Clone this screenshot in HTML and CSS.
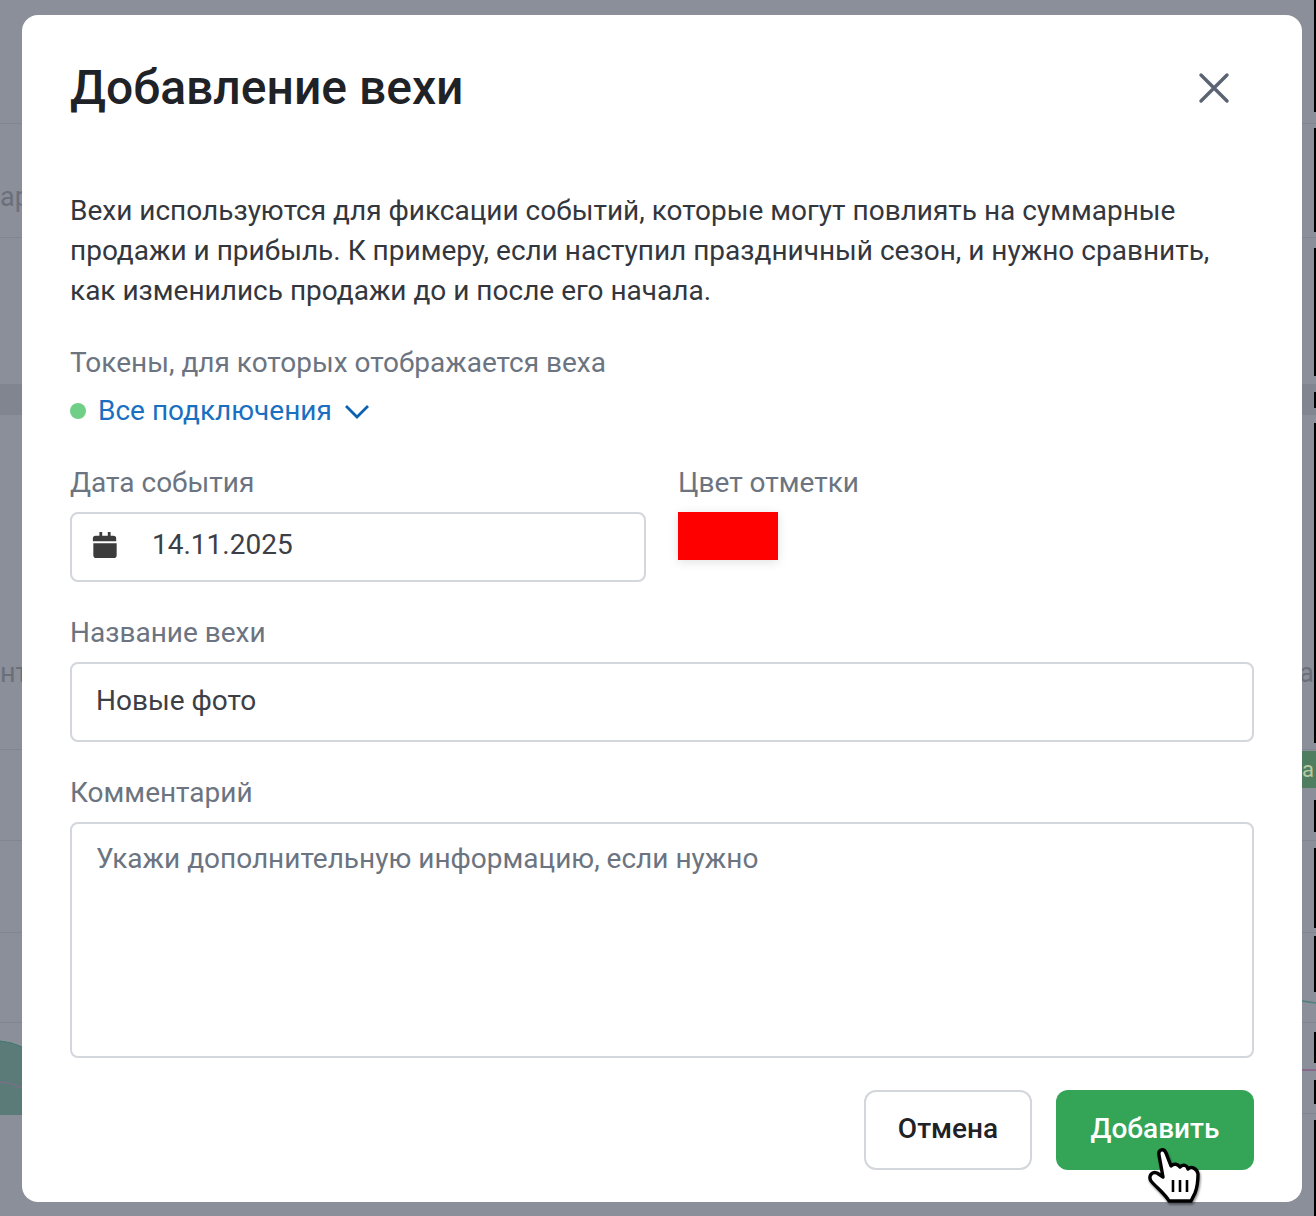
FILE: index.html
```html
<!DOCTYPE html>
<html lang="ru">

<head>
    <meta charset="UTF-8">
    <title>Добавление вехи</title>
    <link rel="stylesheet" href="styles.css">
</head>

<body>
    <div class="backdrop">
        <div class="bg-line" style="top: 123px"></div>
        <div class="bg-line" style="top: 237px"></div>
        <div class="bg-band" style="top: 384px; height: 31px"></div>
        <div class="bg-line" style="top: 749px"></div>
        <div class="bg-line" style="top: 840px"></div>
        <div class="bg-line" style="top: 932px"></div>
        <div class="bg-line" style="top: 1022px"></div>
        <div class="bg-line" style="top: 1113px"></div>
        <span class="bg-text" style="top: 182px; left: 0">ар</span>
        <span class="bg-text" style="top: 658px; left: 0">нт</span>
        <span class="bg-text" style="top: 658px; right: 2px">а</span>
        <span class="bg-tag">а</span>
        <svg class="bg-chart-left" width="22" height="76" viewBox="0 0 22 76">
            <path d="M0 2 Q12 3 22 8 V76 H0 Z" fill="#5b7b78" />
            <path d="M0 2 Q12 3 22 8" fill="none" stroke="#3f7a70" />
            <path d="M0 43 Q10 43 22 49" fill="none" stroke="#8a6a8c" />
        </svg>
        <svg class="bg-chart-right" width="14" height="80" viewBox="0 0 14 80">
            <path d="M0 1 Q7 2 14 3" fill="none" stroke="#4f7f78" stroke-width="1.5" />
            <path d="M0 70 H14" fill="none" stroke="#8a6a8c" stroke-width="2" />
        </svg>
        <svg class="edge-strip" width="2" height="1216" viewBox="0 0 2 1216">
            <path d="M0 0 H2 V112 H0 Z M0 128 H2 V232 H0 Z M0 248 H2 V376 H0 Z M0 392 H2 V408 H0 Z M0 423 H2 V743 H0 Z M0 800 H2 V832 H0 Z M0 848 H2 V928 H0 Z M0 936 H2 V992 H0 Z M0 1032 H2 V1063 H0 Z M0 1080 H2 V1104 H0 Z M0 1120 H2 V1216 H0 Z" fill="#000" />
        </svg>
    </div>

    <div class="modal">
        <header class="modal-head">
            <h1 class="modal-title">Добавление вехи</h1>
            <button class="modal-close" aria-label="Закрыть">
                <svg width="32" height="32" viewBox="0 0 32 32">
                    <path d="M3 3 L29 29 M29 3 L3 29" fill="none" stroke="#5a6472" stroke-width="3.4" stroke-linecap="round" />
                </svg>
            </button>
        </header>

        <p class="modal-text">Вехи используются для фиксации событий, которые могут повлиять на суммарные продажи и прибыль. К примеру, если наступил праздничный сезон, и нужно сравнить, как изменились продажи до и после его начала.</p>

        <div class="field-label">Токены, для которых отображается веха</div>
        <div class="tokens">
            <span class="dot"></span>
            <span class="tokens-name">Все подключения</span>
            <svg width="26" height="16" viewBox="0 0 26 16">
                <path d="M2 3 L13 14 L24 3" fill="none" stroke="#0b62b0" stroke-width="2.8" />
            </svg>
        </div>

        <div class="date-row">
            <div class="date-col">
                <div class="field-label">Дата события</div>
                <div class="input date-input">
                    <svg width="26" height="28" viewBox="0 0 26 30">
                        <path d="M7 1 h3 v4 h6 v-4 h3 v4 h3 a3 3 0 0 1 3 3 v3 h-25 v-3 a3 3 0 0 1 3 -3 h4 Z" fill="#3c3c3c" />
                        <path d="M0.5 13 h25 v13 a3 3 0 0 1 -3 3 h-19 a3 3 0 0 1 -3 -3 Z" fill="#3c3c3c" />
                    </svg>
                    <span>14.11.2025</span>
                </div>
            </div>
            <div class="color-col">
                <div class="field-label">Цвет отметки</div>
                <div class="color-swatch"></div>
            </div>
        </div>

        <div class="field-label name-label">Название вехи</div>
        <div class="input name-input">Новые фото</div>

        <div class="field-label comment-label">Комментарий</div>
        <div class="input comment-input">Укажи дополнительную информацию, если нужно</div>

        <footer class="modal-foot">
            <button class="btn btn-cancel">Отмена</button>
            <button class="btn btn-add">Добавить</button>
        </footer>
    </div>

    <svg class="cursor" width="52" height="60" viewBox="0 0 52 60">
        <path d="M11 9 C10 3 16 2 18 7 L23 20 C26 17 30 18 32 21 C35 18 39 19 40 23 C43 20 49 22 50 28 C50 36 49 42 47 47 L43 55 L21 55 C17 48 9 42 3 35 C0 30 4 25 9 27 L15 31 Z" fill="#fff" stroke="#000" stroke-width="3.4" stroke-linejoin="round" />
        <path d="M25 34 V46 M32 34 V46 M39 34 V46" stroke="#000" stroke-width="2.6" fill="none" />
    </svg>
</body>

</html>
```

FILE: styles.css
```css
html,
body {
    margin: 0;
    height: 100%;
}

body {
    position: relative;
    width: 1316px;
    height: 1216px;
    overflow: hidden;
    background-color: #8a8f99;
    font-family: Roboto, "Liberation Sans", sans-serif;
    box-sizing: border-box;
    padding: 15px 14px 14px 22px;
}

/* page behind the dialog */
.backdrop {
    position: absolute;
    inset: 0;
}

.bg-line {
    position: absolute;
    left: 0;
    right: 0;
    height: 1px;
    background-color: #80858f;
}

.bg-band {
    position: absolute;
    left: 0;
    right: 0;
    background-color: #80858f;
}

.bg-text {
    position: absolute;
    font-size: 27px;
    line-height: 30px;
    color: #6a6f79;
}

.bg-tag {
    position: absolute;
    top: 751px;
    right: 0;
    width: 14px;
    height: 37px;
    background-color: #4f7d60;
    color: #b8c9a0;
    font-size: 22px;
    line-height: 37px;
}

.bg-chart-left {
    position: absolute;
    left: 0;
    top: 1039px;
}

.bg-chart-right {
    position: absolute;
    right: 0;
    top: 1000px;
}

.edge-strip {
    position: absolute;
    top: 0;
    right: 0;
}

/* dialog */
.modal {
    position: relative;
    box-sizing: border-box;
    height: 1187px;
    padding: 48px 48px 32px;
    background-color: #fff;
    border-radius: 16px;
}

.modal-head {
    display: flex;
    justify-content: space-between;
    align-items: center;
    height: 48px;
    margin-bottom: 80px;
}

.modal-title {
    margin: 0;
    padding-top: 2px;
    font-size: 48px;
    font-weight: 500;
    line-height: 48px;
    color: #1f2226;
}

.modal-close {
    display: flex;
    margin-top: 2px;
    margin-right: 24px;
    padding: 0;
    border: none;
    background: none;
}

.modal-text {
    margin: 0 0 32px;
    font-size: 28px;
    line-height: 40px;
    color: #33373d;
}

.field-label {
    font-size: 28px;
    line-height: 40px;
    color: #6b7480;
}

.tokens {
    display: flex;
    align-items: center;
    height: 40px;
    margin: 8px 0 31px;
}

.dot {
    width: 16px;
    height: 16px;
    margin-right: 12px;
    border-radius: 50%;
    background-color: #6fcf86;
}

.tokens-name {
    margin-right: 12px;
    font-size: 28px;
    line-height: 40px;
    color: #1a6fc0;
}

.date-row {
    display: flex;
    gap: 32px;
}

.date-row .field-label,
.name-label,
.comment-label {
    line-height: 42px;
}

.date-col {
    width: 576px;
}

.input {
    box-sizing: border-box;
    border: 2px solid #d3d6da;
    border-radius: 8px;
    font-size: 28px;
    color: #3c4046;
}

.date-input {
    display: flex;
    align-items: center;
    gap: 34px;
    height: 70px;
    margin-top: 8px;
    padding: 0 0 5px 20px;
}

.color-swatch {
    width: 100px;
    height: 48px;
    margin-top: 8px;
    background-color: #ff0000;
    box-shadow: 0 2px 10px rgba(0, 0, 0, 0.12);
}

.name-label {
    margin-top: 30px;
}

.name-input {
    display: flex;
    align-items: center;
    height: 80px;
    margin-top: 8px;
    padding: 0 0 4px 24px;
}

.comment-label {
    margin-top: 30px;
}

.comment-input {
    height: 236px;
    margin-top: 8px;
    padding: 15px 24px;
    line-height: 40px;
    color: #6b7480;
}

.modal-foot {
    display: flex;
    justify-content: flex-end;
    gap: 24px;
    margin-top: 32px;
}

.btn {
    height: 80px;
    padding: 0 0 3px;
    border-radius: 12px;
    font-family: inherit;
    font-size: 28px;
    font-weight: 500;
}

.btn-cancel {
    width: 168px;
    border: 2px solid #d3d6da;
    background-color: #fff;
    color: #1f2226;
}

.btn-add {
    width: 198px;
    border: none;
    background-color: #34a557;
    color: #fff;
}

.cursor {
    position: absolute;
    left: 1148px;
    top: 1146px;
    filter: drop-shadow(1px 2px 1px rgba(0, 0, 0, 0.45));
}
```
